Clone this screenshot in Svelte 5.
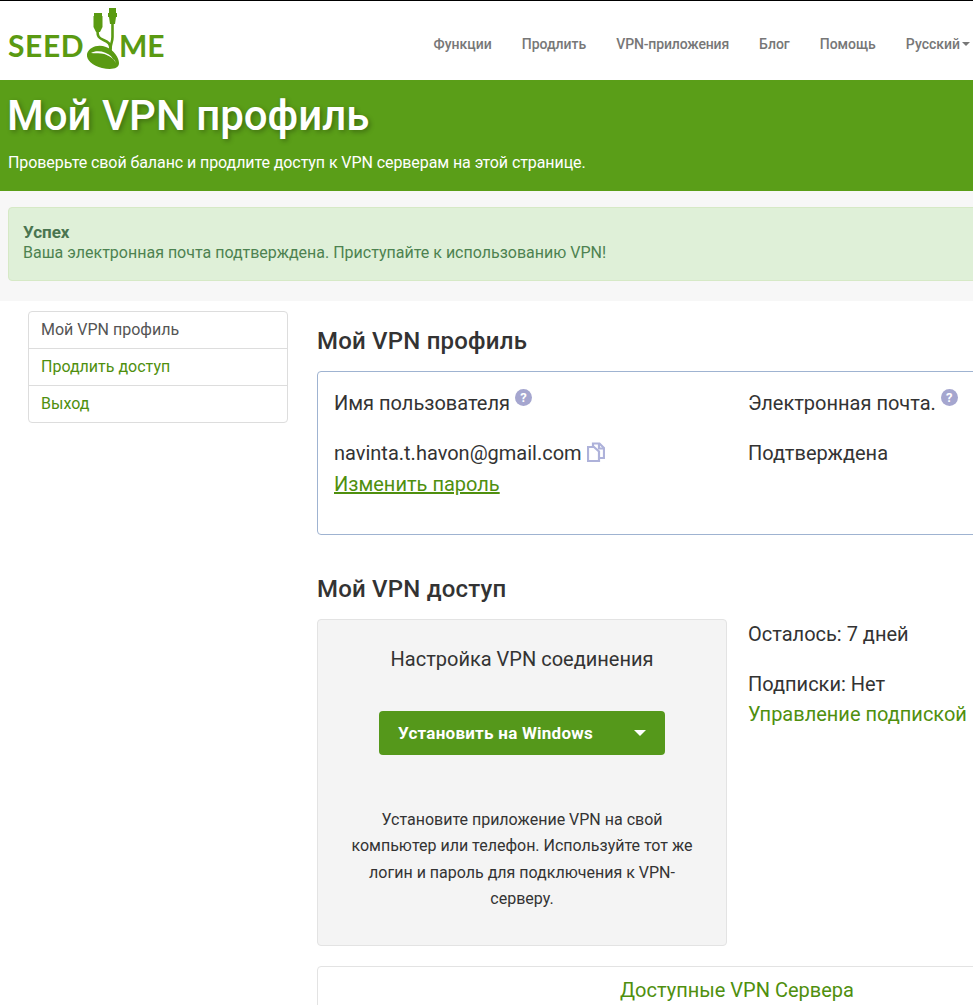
<script lang="ts">
	const navItems = ['Функции', 'Продлить', 'VPN-приложения', 'Блог', 'Помощь'];
	const sideItems = ['Мой VPN профиль', 'Продлить доступ', 'Выход'];
</script>

<div class="page">
	<header class="topbar">
		<div class="logo">
			<span class="logo-word seed">SEED</span>
			<svg class="logo-mark" width="34" height="64" viewBox="0 0 34 64" aria-hidden="true">
				<g fill="#5a9a12">
					<path d="M8 6h8v3h.5v11l-2.500 5h-4l-2.500-5V9H8z" />
					<path d="M23 1h7v5h1v4h-1l-1 7h-5l-1-7h-1V6h1z" />
				</g>
				<g fill="none" stroke="#5a9a12" stroke-width="2.600">
					<path d="M11.500 24c0 5 1 7 6 9 5 2 7 4 7 9" />
					<path d="M26.500 15v15c0 5-2 7-2 12 0 4 2 7 4 10" />
				</g>
				<path fill="#5a9a12" fill-rule="evenodd" d="M1 47C3 40 12 37 20 40c8 3 13 11 13 16 0 6-8 7-17 5C7 59 0 53 1 47zM5 46c5-3 15-2 21 4 2 2 3 4 4 6-3-6-10-9-15-9.500-4-.5-7 0-10-.5z" />
			</svg>
			<span class="logo-word me">ME</span>
		</div>
		<nav class="nav">
			{#each navItems as item}
				<span class="nav-item">{item}</span>
			{/each}
			<span class="nav-item lang">Русский<i class="caret"></i></span>
		</nav>
	</header>

	<section class="hero">
		<h1>Мой VPN профиль</h1>
		<p>Проверьте свой баланс и продлите доступ к VPN серверам на этой странице.</p>
	</section>

	<section class="notice-band">
		<div class="alert">
			<strong>Успех</strong>
			<span>Ваша электронная почта подтверждена. Приступайте к использованию VPN!</span>
		</div>
	</section>

	<div class="content">
		<aside class="side">
			{#each sideItems as item, i}
				<div class="side-item" class:active={i === 0}>{item}</div>
			{/each}
		</aside>

		<main class="main">
			<h2>Мой VPN профиль</h2>
			<div class="profile">
				<div class="profile-col">
					<div class="label">Имя пользователя <span class="help">?</span></div>
					<div class="value">
						navinta.t.havon@gmail.com
						<svg class="copy" width="18" height="20" viewBox="0 0 18 20" aria-hidden="true">
							<g fill="none" stroke="#aeb2da" stroke-width="2.200">
								<path d="M6 5V1.500h6.500L17 6v10h-5" />
								<path d="M1 5h6l5 4.500V19H1z" />
								<path d="M12 1.500V6.500h5" />
							</g>
						</svg>
					</div>
					<a class="change" href="#top">Изменить пароль</a>
				</div>
				<div class="profile-col">
					<div class="label">Электронная почта. <span class="help">?</span></div>
					<div class="value">Подтверждена</div>
				</div>
			</div>

			<h2 class="access-title">Мой VPN доступ</h2>
			<div class="access">
				<div class="setup">
					<div class="setup-title">Настройка VPN соединения</div>
					<button class="install">
						<span>Установить на Windows</span>
						<i class="btn-caret"></i>
					</button>
					<p>Установите приложение VPN на свой компьютер или телефон. Используйте тот же логин и пароль для подключения к VPN-серверу.</p>
				</div>
				<div class="status">
					<div>Осталось: 7 дней</div>
					<div class="subs">Подписки: Нет</div>
					<div class="manage">Управление подпиской</div>
				</div>
			</div>

			<div class="servers">Доступные VPN Сервера</div>
		</main>
	</div>
</div>

<style>
	:global(body) {
		margin: 0;
		background: #fff;
	}

	.page {
		width: 973px;
		height: 1005px;
		overflow: hidden;
		font-family: Roboto, "Liberation Sans", sans-serif;
		color: #333;
	}

	.topbar {
		box-sizing: border-box;
		height: 80px;
		border-top: 1px solid #000;
		display: flex;
		justify-content: space-between;
		padding: 0 3px 0 8px;
	}

	.logo {
		display: flex;
		align-items: flex-start;
		color: #5a9a12;
	}

	.logo-word {
		font-family: Lato, "Open Sans", sans-serif;
		font-weight: 700;
		font-size: 30px;
		line-height: 30px;
		margin-top: 29px;
	}

	.seed {
		width: 78px;
		letter-spacing: 0.6px;
	}

	.logo-mark {
		flex: none;
		margin-top: 6px;
	}

	.logo-word.me {
		margin-left: -1px;
	}

	.nav {
		display: flex;
		gap: 30px;
		padding-top: 35px;
		font-size: 14px;
		font-weight: 500;
		line-height: 16px;
		color: #777;
	}

	.nav-item:nth-child(3) {
		letter-spacing: -0.15px;
	}

	.lang {
		display: flex;
		align-items: center;
		height: 16px;
	}

	.caret {
		width: 0;
		height: 0;
		margin-left: 2px;
		border-left: 4px solid transparent;
		border-right: 4px solid transparent;
		border-top: 4px solid #777;
	}

	.hero {
		box-sizing: border-box;
		height: 111px;
		background: #5a9e18;
		padding: 12px 8px 0 7px;
		color: #fff;
	}

	.hero h1 {
		margin: 0;
		font-size: 42px;
		font-weight: 500;
		line-height: 48px;
		text-shadow: 2px 2px 5px rgba(0, 0, 0, 0.3);
	}

	.hero p {
		margin: 11px 0 0 1px;
		font-size: 16px;
		line-height: 24px;
		letter-spacing: -0.08px;
	}

	.notice-band {
		box-sizing: border-box;
		height: 110px;
		background: #f7f7f7;
		padding: 16px 0 0 8px;
	}

	.alert {
		box-sizing: border-box;
		width: 980px;
		height: 74px;
		padding: 14px 14px;
		display: flex;
		flex-direction: column;
		background: #dff0d8;
		border: 1px solid #d6e9c6;
		border-radius: 4px;
		color: #4d8250;
		font-size: 16px;
		line-height: 20px;
	}

	.alert strong {
		font-size: 17px;
		font-weight: 700;
		color: #4a7550;
	}

	.alert span {
		padding-top: 1px;
	}

	.content {
		display: flex;
		padding: 10px 0 0 28px;
	}

	.side {
		flex: none;
		box-sizing: border-box;
		width: 260px;
		height: 112px;
		border: 1px solid #ddd;
		border-radius: 4px;
		font-size: 16px;
		line-height: 20px;
		color: #4f8f0e;
	}

	.side-item {
		box-sizing: border-box;
		height: 37px;
		padding: 8px 12px;
		border-bottom: 1px solid #ddd;
	}

	.side-item:last-child {
		border-bottom: 0;
	}

	.side-item.active {
		color: #555;
	}

	.main {
		flex: none;
		width: 840px;
		margin-left: 29px;
	}

	h2 {
		margin: 16px 0 0;
		font-size: 24px;
		font-weight: 500;
		line-height: 28px;
		letter-spacing: 0.2px;
		color: #333;
	}

	.profile {
		box-sizing: border-box;
		height: 164px;
		margin-top: 16px;
		padding: 16px 16px;
		display: grid;
		grid-template-columns: 414px 1fr;
		border: 1px solid #9fb3d1;
		border-radius: 4px;
		font-size: 20px;
		line-height: 30px;
	}

	.label {
		height: 50px;
	}

	.help {
		display: inline-block;
		width: 17px;
		height: 17px;
		margin-left: 0;
		border-radius: 50%;
		background: #a5a6cf;
		color: #fff;
		font-size: 13px;
		font-weight: 700;
		line-height: 17px;
		text-align: center;
		vertical-align: 8px;
	}

	.value {
		height: 31px;
	}

	.copy {
		vertical-align: -2px;
	}

	.change {
		color: #4f8f0e;
		text-decoration: underline;
		text-decoration-thickness: 2px;
	}

	.access-title {
		margin-top: 40px;
	}

	.access {
		display: grid;
		grid-template-columns: 410px 1fr;
		column-gap: 21px;
		margin-top: 16px;
	}

	.setup {
		box-sizing: border-box;
		height: 327px;
		padding: 24px 28px 0;
		background: #f4f4f4;
		border: 1px solid #e3e3e3;
		border-radius: 4px;
		text-align: center;
	}

	.setup-title {
		font-size: 20px;
		line-height: 30px;
	}

	.install {
		display: flex;
		align-items: center;
		justify-content: space-between;
		box-sizing: border-box;
		width: 286px;
		height: 44px;
		margin: 37px auto 0;
		padding: 0 19px;
		background: #55981b;
		border: 0;
		border-radius: 4px;
		color: #fff;
		font-family: inherit;
		font-size: 17px;
		font-weight: 700;
		letter-spacing: 0.25px;
	}

	.btn-caret {
		border-left: 6px solid transparent;
		border-right: 6px solid transparent;
		border-top: 6px solid #fff;
	}

	.setup p {
		margin: 52px 0 0;
		font-size: 16px;
		line-height: 26.4px;
	}

	.status {
		font-size: 20px;
		line-height: 30px;
	}

	.subs {
		margin-top: 20px;
	}

	.manage {
		color: #4f8f0e;
	}

	.servers {
		box-sizing: border-box;
		height: 60px;
		margin-top: 20px;
		padding-top: 9px;
		border: 1px solid #e3e3e3;
		border-radius: 4px;
		color: #4f8f0e;
		font-size: 20px;
		line-height: 28px;
		text-align: center;
	}
</style>
